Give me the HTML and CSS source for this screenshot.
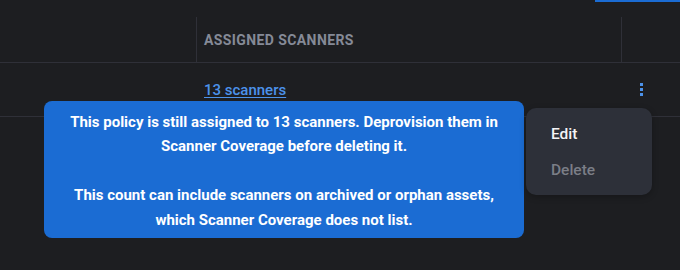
FILE: index.html
```html
<!DOCTYPE html>
<html lang="en">
<head>
<meta charset="utf-8">
<title>Policies</title>
<link rel="stylesheet" href="styles.css">
</head>
<body>
<div class="page">
  <div class="topbar"><span class="tab-indicator"></span></div>
  <div class="table">
    <div class="row head">
      <div class="cell c1"></div>
      <div class="cell c2"><span class="th">Assigned scanners</span></div>
      <div class="cell c3"></div>
    </div>
    <div class="row body-row">
      <div class="cell c1"></div>
      <div class="cell c2"><a class="link" href="#">13 scanners</a></div>
      <div class="cell c3">
        <svg class="kebab" width="3" height="13" viewBox="0 0 3 13"><rect x="0" y="0" width="3" height="3"/><rect x="0" y="5" width="3" height="3"/><rect x="0" y="10" width="3" height="3"/></svg>
      </div>
    </div>
  </div>
  <div class="tooltip">
    <p>This policy is still assigned to 13 scanners. Deprovision them in<br>Scanner Coverage before deleting it.</p>
    <p>This count can include scanners on archived or orphan assets,<br>which Scanner Coverage does not list.</p>
  </div>
  <div class="menu">
    <div class="item edit">Edit</div>
    <div class="item delete">Delete</div>
  </div>
</div>
</body>
</html>
```
FILE: styles.css
```css
html, body {
  margin: 0;
  padding: 0;
  background: #1d1e21;
}
.page {
  position: relative;
  width: 680px;
  height: 270px;
  overflow: hidden;
  font-family: Roboto, "Noto Sans", sans-serif;
}
.topbar {
  height: 17px;
  display: flex;
  justify-content: flex-end;
  align-items: flex-start;
}
.tab-indicator {
  width: 85px;
  height: 2px;
  background: #1b6cd3;
}
.row {
  display: grid;
  grid-template-columns: 197px 425px 1fr;
}
.cell {
  display: flex;
  align-items: center;
}
.head {
  height: 46px;
  border-bottom: 1px solid #2f3038;
  box-sizing: border-box;
}
.head .c1, .head .c2 {
  border-right: 1px solid #2f3038;
}
.c2 {
  padding-left: 7px;
}
.th {
  text-transform: uppercase;
  font-size: 14px;
  font-weight: 700;
  color: #858a97;
  letter-spacing: 0.4px;
}
.body-row {
  height: 54px;
  border-bottom: 1px solid #2f3038;
  box-sizing: border-box;
}
.link {
  color: #4c92ea;
  font-size: 15px;
  font-weight: 500;
  text-decoration: underline;
  text-underline-offset: 2px;
}
.c3 {
  padding-left: 18px;
}
.kebab {
  fill: #4c92ea;
  display: block;
}
.tooltip {
  position: absolute;
  left: 44px;
  top: 101px;
  width: 480px;
  height: 137px;
  box-sizing: border-box;
  padding: 8.5px 8px 0;
  background: #1b6cd3;
  border-radius: 8px;
  color: #ffffff;
  font-size: 15px;
  font-weight: 700;
  line-height: 24.5px;
  text-align: center;
}
.tooltip p {
  margin: 0 0 24.5px;
}
.menu {
  position: absolute;
  left: 526px;
  top: 108px;
  width: 126px;
  height: 87px;
  box-sizing: border-box;
  padding: 8px 0 7px;
  background: #2d3039;
  border-radius: 10px;
  box-shadow: 0 2px 6px rgba(0, 0, 0, 0.25);
}
.item {
  height: 36px;
  padding-left: 25px;
  display: flex;
  align-items: center;
  font-size: 15.5px;
  font-weight: 500;
}
.edit {
  color: #f4f4f6;
}
.delete {
  color: #7b7e87;
}
```
